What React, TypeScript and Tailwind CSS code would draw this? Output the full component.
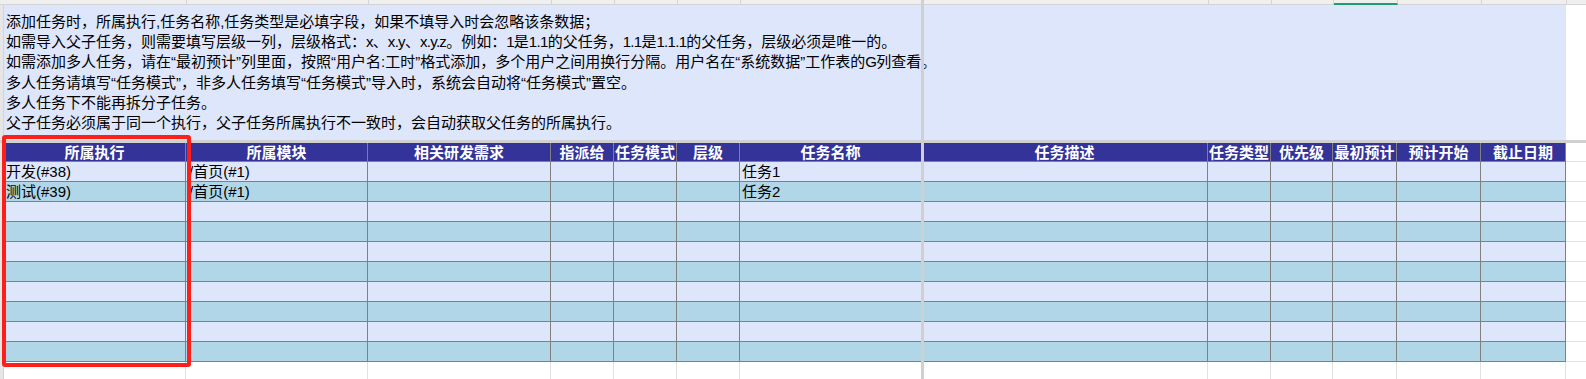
const cols = [
  { w: "w-[182px]", title: "所属执行" },
  { w: "w-[182px]", title: "所属模块" },
  { w: "w-[183px]", title: "相关研发需求" },
  { w: "w-[63px]", title: "指派给" },
  { w: "w-[63px]", title: "任务模式" },
  { w: "w-[63px]", title: "层级" },
  { w: "w-[182px]", title: "任务名称" },
  { w: "w-[286px]", title: "任务描述" },
  { w: "w-[63px]", title: "任务类型" },
  { w: "w-[62px]", title: "优先级" },
  { w: "w-[64px]", title: "最初预计" },
  { w: "w-[84px]", title: "预计开始" },
  { w: "w-[85px]", title: "截止日期" },
];

const rows: string[][] = [
  ["开发(#38)", "/首页(#1)", "", "", "", "", "任务1"],
  ["测试(#39)", "/首页(#1)", "", "", "", "", "任务2"],
  [], [], [], [], [], [], [], [],
];

const notes = [
  "添加任务时，所属执行,任务名称,任务类型是必填字段，如果不填导入时会忽略该条数据；",
  "如需导入父子任务，则需要填写层级一列，层级格式：x、x.y、x.y.z。例如：1是1.1的父任务，1.1是1.1.1的父任务，层级必须是唯一的。",
  "如需添加多人任务，请在“最初预计”列里面，按照“用户名:工时”格式添加，多个用户之间用换行分隔。用户名在“系统数据”工作表的G列查看。",
  "多人任务请填写“任务模式”，非多人任务填写“任务模式”导入时，系统会自动将“任务模式”置空。",
  "多人任务下不能再拆分子任务。",
  "父子任务必须属于同一个执行，父子任务所属执行不一致时，会自动获取父任务的所属执行。",
];

// latin bits in the sheet are a narrower font, tighten them a little
const Note = ({ text }: { text: string }) => (
  <div>
    {text.split(/([A-Za-z0-9.]+)/).map((part, i) =>
      i % 2 ? (
        <span key={i} className="tracking-[-0.7px]">
          {part}
        </span>
      ) : (
        part
      )
    )}
  </div>
);

const Gutter = () => (
  <div className="w-[4px] shrink-0 bg-[#e6e6e6] border-r border-[#d4d4d4]" />
);

const App = () => {
  return (
    <div className="relative w-[1586px] h-[379px] overflow-hidden bg-white text-black font-['Liberation_Sans','Noto_Sans_CJK_SC',sans-serif]">
      {/* column header strip (cut off) */}
      <div className="flex h-[5px]">
        <div className="w-[5px] shrink-0 bg-[#efefef] border-b border-[#d4d4d4]" />
        {cols.map((c, i) => (
          <div
            key={c.title}
            className={
              c.w +
              " shrink-0 bg-[#efefef] border-r border-[#d4d4d4] " +
              (i === 10 ? "border-b-2 border-b-[#1f9d6e]" : "border-b")
            }
          />
        ))}
        <div className="flex-1 bg-[#efefef] border-b border-[#d4d4d4]" />
      </div>

      {/* instructions */}
      <div className="flex h-[135px]">
        <Gutter />
        <div className="w-[1562px] shrink-0 bg-[#dde6fa] pl-[2px] pt-[7px] text-[15px] leading-[20.2px] whitespace-nowrap">
          {notes.map((n) => (
            <Note key={n} text={n} />
          ))}
        </div>
        <div className="flex-1 bg-white" />
      </div>

      {/* frozen pane line */}
      <div className="h-[3px] bg-[#d0d0d0]" />

      {/* header */}
      <div className="flex h-[19px]">
        <Gutter />
        {cols.map((c) => (
          <div
            key={c.title}
            className={
              c.w +
              " shrink-0 bg-[#333399] border-r border-b border-[#808080] text-white font-bold text-[15px] leading-[18px] text-center whitespace-nowrap font-['Noto_Sans_CJK_SC',sans-serif]"
            }
          >
            {c.title}
          </div>
        ))}
        <div className="flex-1 border-b border-[#e2e2e2]" />
      </div>

      {/* data rows */}
      {rows.map((r, ri) => (
        <div key={ri} className="flex h-[20px]">
          <Gutter />
          {cols.map((c, ci) => (
            <div
              key={c.title}
              className={
                c.w +
                " shrink-0 border-r border-b border-[#808080] text-[15px] leading-[19px] whitespace-nowrap overflow-hidden " +
                (ri % 2 === 0 ? "bg-[#dde6fa] " : "bg-[#b0d6e8] ") +
                (ci === 1 ? "pl-[3px]" : "pl-[2px]")
              }
            >
              {r[ci] ?? ""}
            </div>
          ))}
          <div className="flex-1 border-b border-[#e2e2e2]" />
        </div>
      ))}

      {/* empty sheet below */}
      <div className="flex h-[20px]">
        <Gutter />
        {cols.map((c) => (
          <div key={c.title} className={c.w + " shrink-0 border-r border-b border-[#e2e2e2]"} />
        ))}
        <div className="flex-1 border-b border-[#e2e2e2]" />
      </div>

      {/* frozen pane vertical line */}
      <div className="absolute left-[921px] top-0 w-[3px] h-full bg-[#d0d0d0]" />

      {/* red highlight */}
      <div className="absolute left-[2px] top-[135px] w-[189px] h-[232px] border-4 border-[#ff1f1a] rounded-[3px]" />
    </div>
  );
};

export default App;
